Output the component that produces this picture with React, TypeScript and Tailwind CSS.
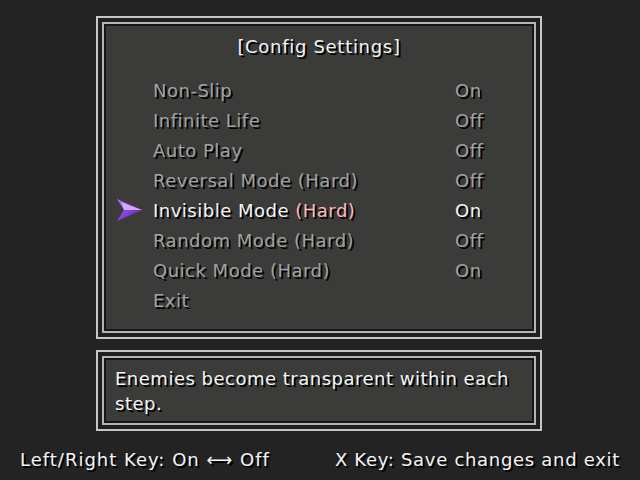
const font = "font-['DejaVu_Sans',sans-serif]";
const shadow = "[text-shadow:2px_2px_0_#000]";

const rows = [
  { label: "Non-Slip", value: "On" },
  { label: "Infinite Life", value: "Off" },
  { label: "Auto Play", value: "Off" },
  { label: "Reversal Mode (Hard)", value: "Off" },
  { label: "Invisible Mode", hard: true, value: "On", active: true },
  { label: "Random Mode (Hard)", value: "Off" },
  { label: "Quick Mode (Hard)", value: "On" },
  { label: "Exit", value: "" },
];

function Frame({ className, children }: { className: string; children: React.ReactNode }) {
  return (
    <div className={`border-2 border-[#c6c6c6] bg-[#1f1f1f] p-[4px] ${className}`}>
      <div className="h-full border-2 border-[#b4b4b4]">
        <div className="h-full border-2 border-[#161616] bg-[#3b3c3a]">{children}</div>
      </div>
    </div>
  );
}

function Cursor() {
  return (
    <svg width="26" height="22" viewBox="0 0 26 22">
      <defs>
        <linearGradient id="g" x1="0" y1="0" x2="1" y2="1">
          <stop offset="0" stopColor="#b070ff" />
          <stop offset="1" stopColor="#5a18b8" />
        </linearGradient>
      </defs>
      <polygon points="0,0 25,11 0,22 7,11" fill="url(#g)" />
      <polygon points="7,11 25,11 4,3" fill="#d4a8ff" />
    </svg>
  );
}

export default function App() {
  return (
    <div className={`w-[640px] h-[480px] bg-[#232323] flex flex-col ${font} text-[18px] tracking-[0.5px]`}>
      <Frame className="ml-[96px] mt-[16px] w-[446px] h-[323px]">
        <div className="flex flex-col pt-[5px]">
          <div className={`h-[30px] flex items-center justify-center text-[#f2f2f2] tracking-[0.7px] ${shadow}`}>
            [Config Settings]
          </div>
          <div className="mt-[14px] flex flex-col">
            {rows.map((r) => (
              <div key={r.label} className={`h-[30px] flex items-center pl-[11px] ${shadow}`}>
                <div className="w-[36px] flex items-center">{r.active && <Cursor />}</div>
                <div className={`w-[302px] ${r.active ? "text-[#f4f4f4]" : "text-[#a2a2a2]"}`}>
                  {r.label}
                  {r.hard && <span className="text-[#ffb8b8]"> (Hard)</span>}
                </div>
                <div className={r.active ? "text-[#f4f4f4]" : "text-[#a2a2a2]"}>{r.value}</div>
              </div>
            ))}
          </div>
        </div>
      </Frame>
      <Frame className="ml-[96px] mt-[11px] w-[446px] h-[81px]">
        <div className={`pl-[9px] pt-[6px] leading-[25px] text-[#f4f4f4] ${shadow}`}>
          Enemies become transparent within each
          <br />
          step.
        </div>
      </Frame>
      <div className={`mt-[15px] flex justify-between px-[20px] text-[#f4f4f4] tracking-[0.7px] ${shadow}`}>
        <span className="tracking-[1px]">Left/Right Key: On ⟷ Off</span>
        <span>X Key: Save changes and exit</span>
      </div>
    </div>
  );
}
